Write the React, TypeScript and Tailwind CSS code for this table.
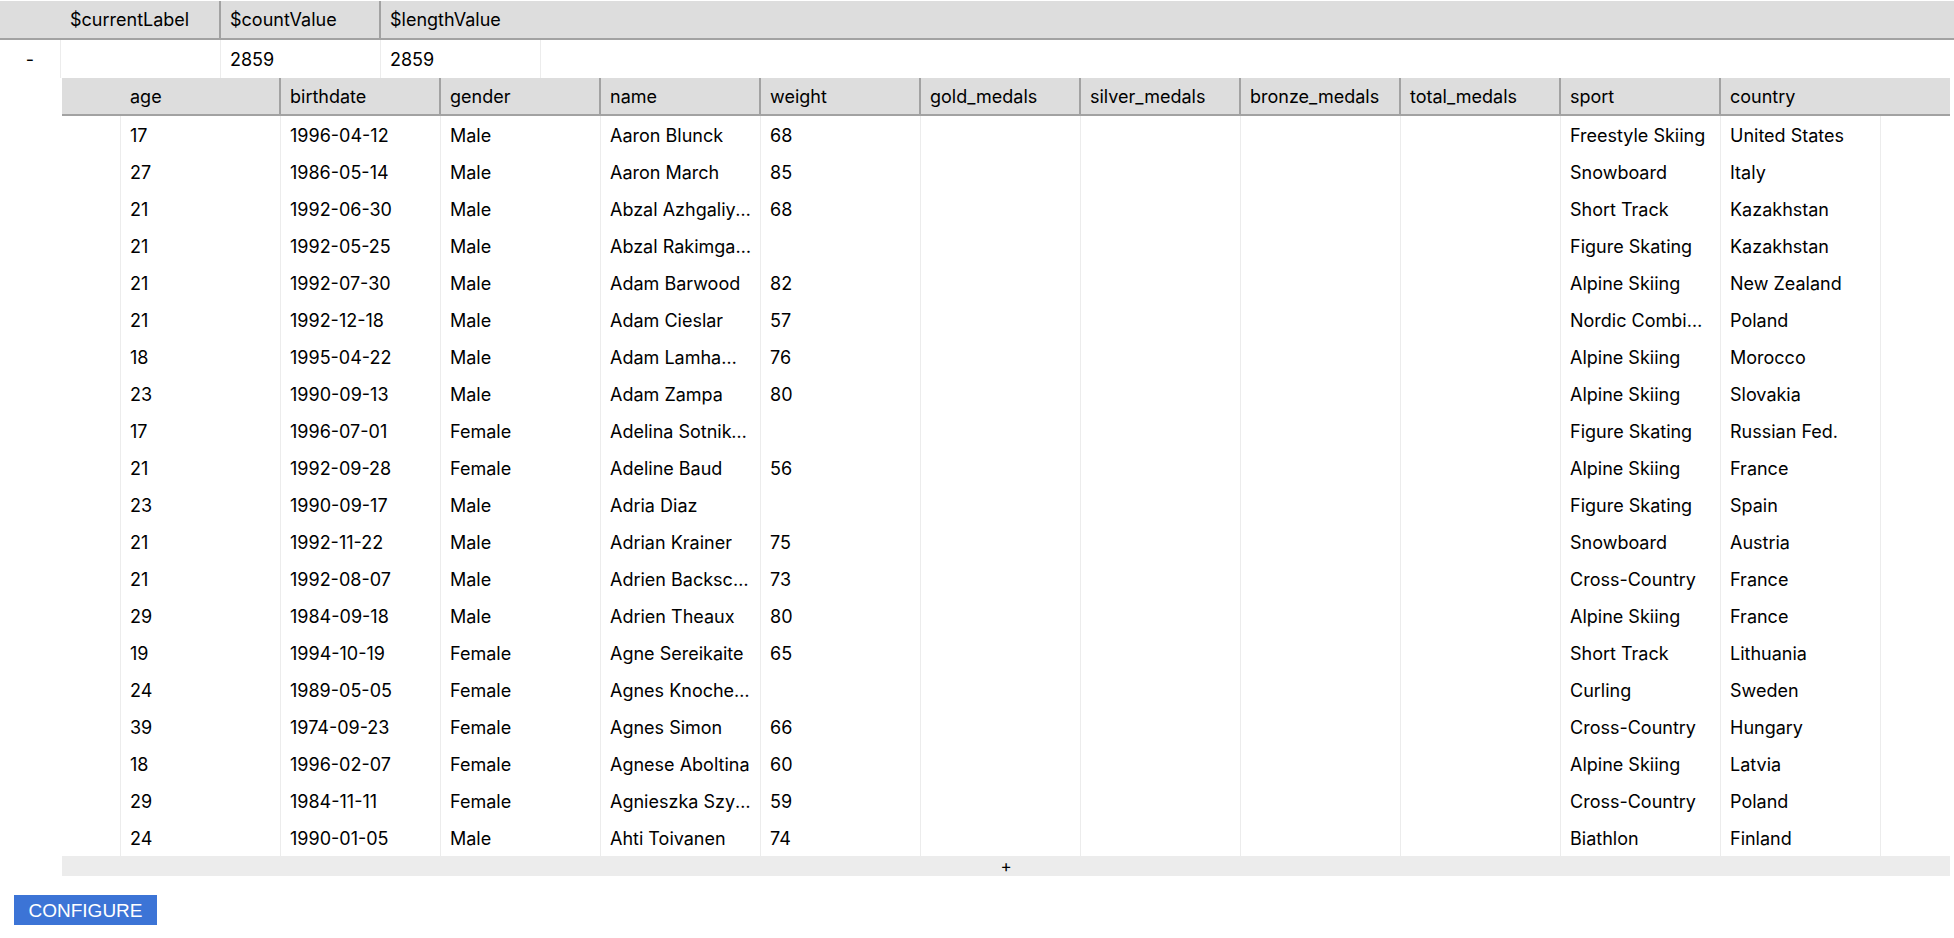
const columns = [
  "age",
  "birthdate",
  "gender",
  "name",
  "weight",
  "gold_medals",
  "silver_medals",
  "bronze_medals",
  "total_medals",
  "sport",
  "country",
];

type Athlete = [string, string, string, string, string, string, string];

// age, birthdate, gender, name, weight, sport, country
const rows: Athlete[] = [
  ["17", "1996-04-12", "Male", "Aaron Blunck", "68", "Freestyle Skiing", "United States"],
  ["27", "1986-05-14", "Male", "Aaron March", "85", "Snowboard", "Italy"],
  ["21", "1992-06-30", "Male", "Abzal Azhgaliyev", "68", "Short Track", "Kazakhstan"],
  ["21", "1992-05-25", "Male", "Abzal Rakimgaliev", "", "Figure Skating", "Kazakhstan"],
  ["21", "1992-07-30", "Male", "Adam Barwood", "82", "Alpine Skiing", "New Zealand"],
  ["21", "1992-12-18", "Male", "Adam Cieslar", "57", "Nordic Combined", "Poland"],
  ["18", "1995-04-22", "Male", "Adam Lamhamedi", "76", "Alpine Skiing", "Morocco"],
  ["23", "1990-09-13", "Male", "Adam Zampa", "80", "Alpine Skiing", "Slovakia"],
  ["17", "1996-07-01", "Female", "Adelina Sotnikova", "", "Figure Skating", "Russian Fed."],
  ["21", "1992-09-28", "Female", "Adeline Baud", "56", "Alpine Skiing", "France"],
  ["23", "1990-09-17", "Male", "Adria Diaz", "", "Figure Skating", "Spain"],
  ["21", "1992-11-22", "Male", "Adrian Krainer", "75", "Snowboard", "Austria"],
  ["21", "1992-08-07", "Male", "Adrien Backscheider", "73", "Cross-Country", "France"],
  ["29", "1984-09-18", "Male", "Adrien Theaux", "80", "Alpine Skiing", "France"],
  ["19", "1994-10-19", "Female", "Agne Sereikaite", "65", "Short Track", "Lithuania"],
  ["24", "1989-05-05", "Female", "Agnes Knochenhauer", "", "Curling", "Sweden"],
  ["39", "1974-09-23", "Female", "Agnes Simon", "66", "Cross-Country", "Hungary"],
  ["18", "1996-02-07", "Female", "Agnese Aboltina", "60", "Alpine Skiing", "Latvia"],
  ["29", "1984-11-11", "Female", "Agnieszka Szymanczak", "59", "Cross-Country", "Poland"],
  ["24", "1990-01-05", "Male", "Ahti Toivanen", "74", "Biathlon", "Finland"],
];

function BodyCell({ value }: { value: string }) {
  return (
    <div className="w-[160px] shrink-0 h-full border-r border-[#ececec] pl-[9px] pr-[8px] pt-px flex items-center min-w-0">
      <span className="truncate">{value}</span>
    </div>
  );
}

export default function App() {
  return (
    <div className="pt-px font-['Inter',sans-serif] text-[18px] text-black bg-white min-h-screen">
      {/* outer header */}
      <div className="flex h-[39px] bg-[#dddddd] border-b-2 border-[#a2a2a2]">
        <div className="w-[61px] shrink-0" />
        <div className="w-[160px] shrink-0 border-r-2 border-[#a2a2a2] pl-[9px] flex items-center">
          $currentLabel
        </div>
        <div className="w-[160px] shrink-0 border-r-2 border-[#a2a2a2] pl-[9px] flex items-center">
          $countValue
        </div>
        <div className="w-[160px] shrink-0 pl-[9px] flex items-center">$lengthValue</div>
      </div>

      {/* outer data row */}
      <div className="flex h-[38px]">
        <div className="w-[61px] shrink-0 border-r border-[#ececec] flex items-center justify-center">
          -
        </div>
        <div className="w-[160px] shrink-0 border-r border-[#ececec]" />
        <div className="w-[160px] shrink-0 border-r border-[#ececec] pl-[9px] flex items-center">
          2859
        </div>
        <div className="w-[160px] shrink-0 border-r border-[#ececec] pl-[9px] flex items-center">
          2859
        </div>
      </div>

      {/* nested table */}
      <div className="flex">
        <div className="w-[62px] shrink-0" />
        <div className="flex-1 mr-[4px]">
          <div className="flex h-[38px] bg-[#dddddd] border-b-2 border-[#a2a2a2]">
            <div className="w-[59px] shrink-0" />
            {columns.map((c, i) => (
              <div
                key={c}
                className={
                  i < columns.length - 1
                    ? "w-[160px] shrink-0 border-r-2 border-[#a2a2a2] pl-[9px] flex items-center"
                    : "w-[160px] shrink-0 pl-[9px] flex items-center"
                }
              >
                {c}
              </div>
            ))}
          </div>

          {rows.map((r, idx) => (
            <div key={idx} className="flex h-[37px]">
              <div className="w-[59px] shrink-0 border-r border-[#ececec]" />
              <BodyCell value={r[0]} />
              <BodyCell value={r[1]} />
              <BodyCell value={r[2]} />
              <BodyCell value={r[3]} />
              <BodyCell value={r[4]} />
              <BodyCell value="" />
              <BodyCell value="" />
              <BodyCell value="" />
              <BodyCell value="" />
              <BodyCell value={r[5]} />
              <BodyCell value={r[6]} />
            </div>
          ))}

          <div className="h-[20px] bg-[#ececec] flex items-center justify-center text-[17px] leading-none">
            +
          </div>
        </div>
      </div>

      <div className="pl-[14px] pt-[19px]">
        <button className="w-[143px] h-[30px] bg-[#3c74d6] text-white font-['Liberation_Sans',Arial,sans-serif] text-[19px] leading-none flex items-center justify-center">
          CONFIGURE
        </button>
      </div>
    </div>
  );
}
